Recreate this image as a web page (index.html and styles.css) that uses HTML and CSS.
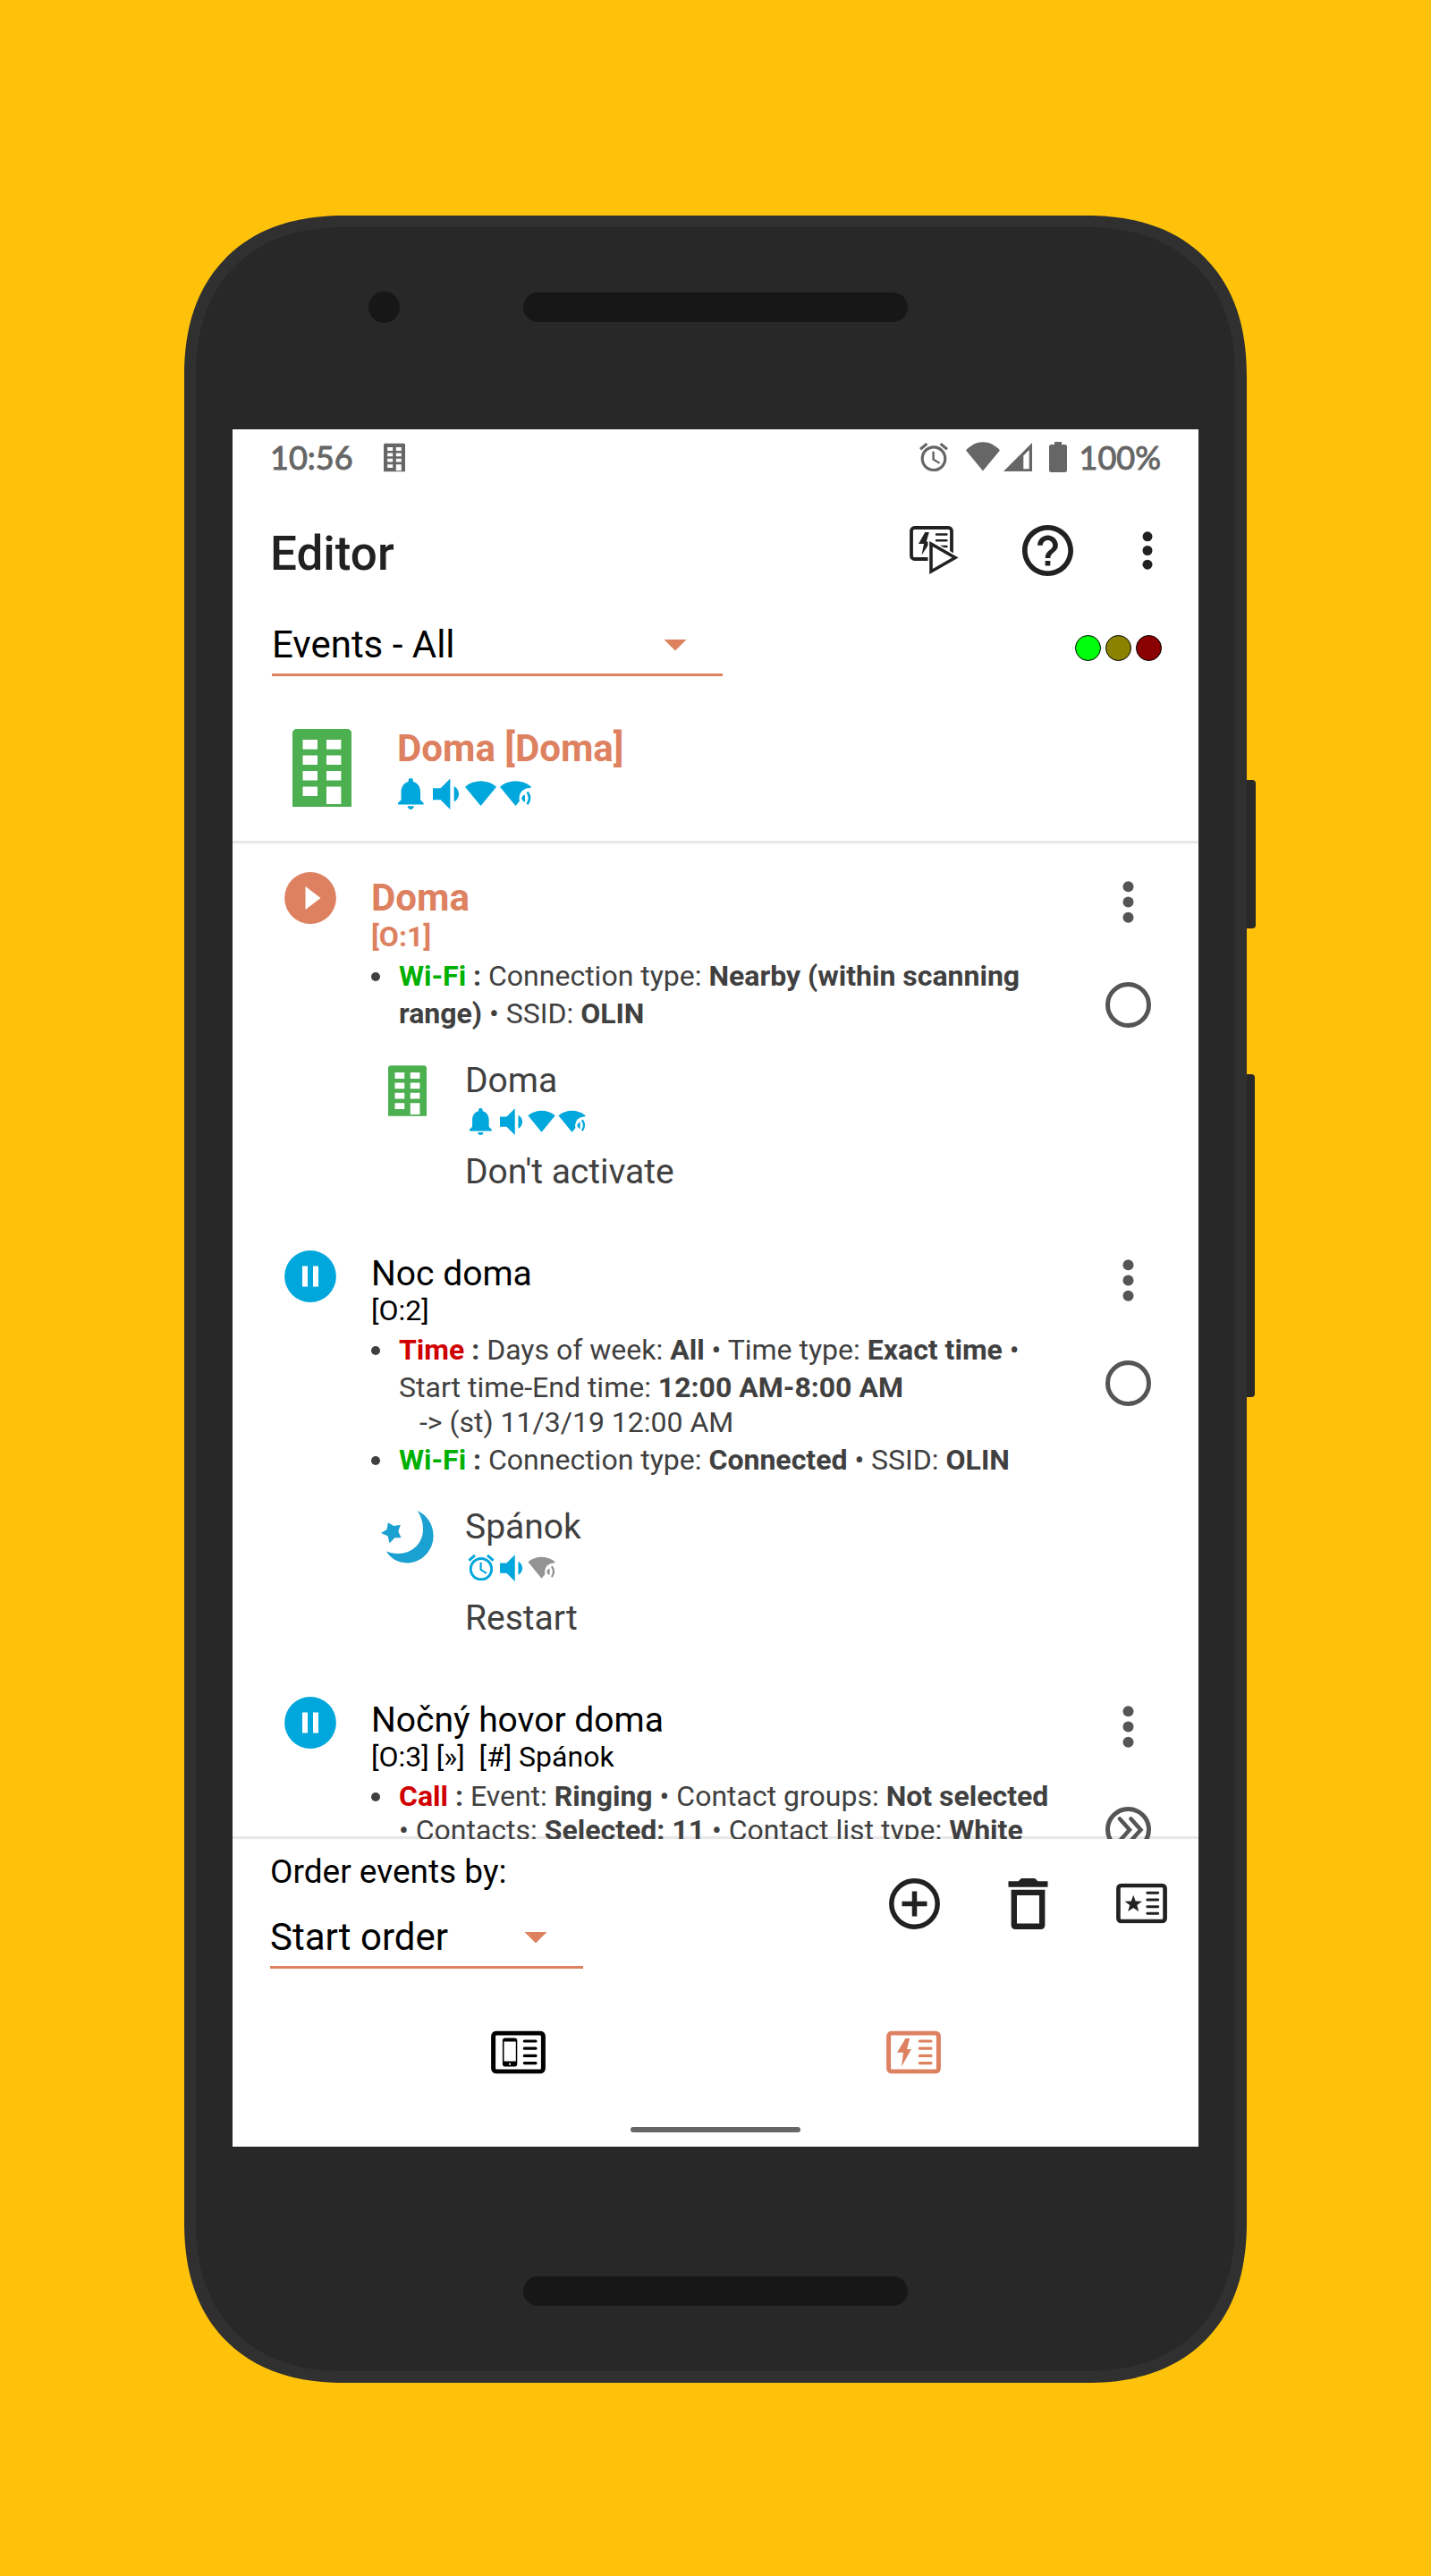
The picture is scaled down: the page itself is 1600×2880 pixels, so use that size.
FILE: index.html
```html
<!DOCTYPE html>
<html lang="en">
<head>
<meta charset="utf-8">
<meta name="viewport" content="width=device-width, initial-scale=1">
<title>Editor</title>
<link rel="stylesheet" href="styles.css">
</head>
<body>
<svg class="sprite" aria-hidden="true">
  <symbol id="building" viewBox="0 0 66 87"><path fill="currentColor" fill-rule="evenodd" d="M3 0H63L66 3V87H0V3ZM11.500 12V22.700H28V12ZM38 12V22.700H54.400V12ZM11.500 29.500V40H28V29.500ZM38 29.500V40H54.400V29.500ZM11.500 47V57.500H28V47ZM38 47V57.500H54.400V47ZM11.500 64.500V75H28V64.500ZM38 64.500V84H54.400V64.500Z"/></symbol>
  <symbol id="alarm" viewBox="2 1.860 20 20.140"><path fill="currentColor" d="M22 5.720l-4.600-3.860-1.290 1.530 4.600 3.860L22 5.720zM7.880 3.390L6.600 1.860 2 5.710l1.290 1.530 4.590-3.850zM12.500 8H11v6l4.750 2.850.75-1.230-4-2.370V8zM12 4c-4.970 0-9 4.030-9 9s4.020 9 9 9a9 9 0 0 0 0-18zm0 16c-3.870 0-7-3.130-7-7s3.130-7 7-7 7 3.130 7 7-3.130 7-7 7z"/></symbol>
  <symbol id="ind-bell" viewBox="0 0 39 37"><path fill="currentColor" transform="translate(-6.200 -3.500) scale(1.790)" d="M12 22c1.100 0 2-.9 2-2h-4c0 1.100.89 2 2 2zm6-6v-5c0-3.070-1.640-5.640-4.500-6.320V4c0-.83-.67-1.500-1.500-1.500s-1.500.67-1.500 1.500v.68C7.630 5.360 6 7.920 6 11v5l-2 2v1h16v-1l-2-2z"/></symbol>
  <symbol id="ind-alarm" viewBox="0 0 39 37" overflow="visible"><use href="#alarm" x="-1" y="1" width="34" height="34"/></symbol>
  <symbol id="ind-volume" viewBox="0 0 39 37"><path fill="currentColor" transform="translate(-9.750 -7.100) scale(2.150)" d="M18.500 12c0-1.770-1.020-3.290-2.500-4.030v8.050c1.480-.73 2.500-2.250 2.500-4.020zM5 9v6h4l5 5V4L9 9H5z"/></symbol>
  <symbol id="ind-wifi" viewBox="0 0 39 37" overflow="visible"><path fill="currentColor" d="M15.500 32L-2 10.700C8 2.200 23 2.200 33 10.700Z"/></symbol>
  <symbol id="ind-hotspot" viewBox="0 0 39 37" overflow="visible"><path fill="currentColor" d="M15.500 32L-2 10.700C8 2.200 23 2.200 33 10.700Z"/><circle cx="31" cy="23.500" r="11.500" fill="#fff"/><path fill="currentColor" d="M26 19.200C21 21.500 21 25.500 26 27.800Z"/><path fill="none" stroke="currentColor" stroke-width="2.600" d="M28.600 16.500Q33.500 23.300 28.600 30.200"/></symbol>
  <symbol id="card" viewBox="0 0 61 48"><rect x="2.600" y="2.600" width="55.800" height="42.800" rx="3.500" fill="none" stroke="currentColor" stroke-width="5"/><path d="M37.300 11.500H50M37.300 19.700H50M37.300 27.900H50M37.300 36.100H50" stroke="currentColor" stroke-width="3.200" stroke-linecap="round"/></symbol>
  <symbol id="dots" viewBox="0 0 12 47"><g fill="currentColor"><circle cx="6" cy="6.300" r="6"/><circle cx="6" cy="23.500" r="6"/><circle cx="6" cy="40.700" r="6"/></g></symbol>
  <symbol id="pause" viewBox="0 0 58 58"><circle cx="29" cy="29" r="28.900" fill="currentColor"/><path fill="#fff" d="M20 17.500H26V40.500H20ZM32 17.500H38V40.500H32Z"/></symbol>
</svg>

<div class="phone">
  <span class="side-key side-key-power"></span>
  <span class="side-key side-key-volume"></span>
  <div class="bezel-top"><span class="camera"></span><span class="speaker"></span></div>

  <div class="screen">
    <div class="status-bar">
      <span>10:56</span>
      <svg class="status-profile" width="24" height="33"><use href="#building"/></svg>
      <div class="status-icons">
        <svg width="32" height="34"><use href="#alarm"/></svg>
        <svg class="status-wifi" width="38" height="34" viewBox="0 0 38 34"><path fill="currentColor" d="M19 32.500L0 9.500C11-2.900 27-2.900 38 9.500Z"/></svg>
        <svg class="status-signal" width="32" height="34" viewBox="0 0 32 34"><path fill="currentColor" fill-rule="evenodd" d="M0 33L32 1V33ZM22.300 15.500V30.300H28.700V9Z"/></svg>
        <svg class="status-battery" width="20" height="34" viewBox="0 0 20 34"><path fill="currentColor" d="M6 0H14V3H17.500Q20 3 20 5.500V31.500Q20 34 17.500 34H2.500Q0 34 0 31.500V5.500Q0 3 2.500 3H6Z"/></svg>
        <span>100%</span>
      </div>
    </div>

    <header class="app-bar">
      <h1>Editor</h1>
      <div class="app-actions">
        <button type="button" aria-label="Run events">
          <svg width="56" height="57" viewBox="0 0 56 57"><rect x="2" y="3" width="45" height="35" rx="3.500" fill="none" stroke="currentColor" stroke-width="3.800"/><path fill="currentColor" d="M17.300 8H21.800L18.800 18.500H23.500L13.500 33.500L16 21H10Z"/><path stroke="currentColor" stroke-width="2.400" stroke-linecap="round" d="M30 10.500H41.500M30 17.200H41.500M30 24H41.500"/><path fill="#fff" stroke="#fff" stroke-width="7" d="M24 21L51 36.500L24 52Z"/><path fill="#fff" stroke="currentColor" stroke-width="3.600" d="M24 21L51 36.500L24 52Z"/></svg>
        </button>
        <button type="button" aria-label="Help">
          <svg width="57" height="57" viewBox="2 2 20 20"><path fill="currentColor" d="M11 18h2v-2h-2v2zm1-16C6.480 2 2 6.480 2 12s4.480 10 10 10 10-4.480 10-10S17.520 2 12 2zm0 18c-4.410 0-8-3.590-8-8s3.590-8 8-8 8 3.590 8 8-3.590 8-8 8zm0-14c-2.210 0-4 1.790-4 4h2c0-1.100.9-2 2-2s2 .9 2 2c0 2-3 1.750-3 5h2c0-2.250 3-2.500 3-5 0-2.210-1.790-4-4-4z"/></svg>
        </button>
        <button type="button" aria-label="More options"><svg width="26" height="43"><use href="#dots"/></svg></button>
      </div>
    </header>

    <div class="filter-bar">
      <div class="picker picker-filter"><select aria-label="Filter events"><option>Events - All</option></select></div>
      <div class="lights"><span class="light light-green"></span><span class="light light-yellow"></span><span class="light light-red"></span></div>
    </div>

    <section class="active-profile">
      <svg class="profile-icon" width="66" height="87"><use href="#building"/></svg>
      <div>
        <h2>Doma [Doma]</h2>
        <div class="indicators">
          <svg><use href="#ind-bell"/></svg><svg><use href="#ind-volume"/></svg><svg><use href="#ind-wifi"/></svg><svg><use href="#ind-hotspot"/></svg>
        </div>
      </div>
    </section>

    <main class="events">
      <article class="event event-running">
        <svg class="event-state" width="58" height="58" viewBox="0 0 58 58"><circle cx="29" cy="29" r="28.900" fill="currentColor"/><path fill="#fff" d="M23.500 16L40.500 29L23.500 42Z"/></svg>
        <div class="event-body">
          <h3>Doma</h3>
          <p class="event-order">[O:1]</p>
          <ul class="conditions">
            <li><div><b class="pass">Wi-Fi</b> <b>:</b> Connection type: <b>Nearby (within scanning range)</b> • SSID: <b>OLIN</b></div></li>
          </ul>
          <div class="preview">
            <svg class="preview-icon" width="59" height="60" viewBox="0 0 59 60"><use class="green" href="#building" x="8" y="1" width="43" height="57"/></svg>
            <div>
              <p>Doma</p>
              <div class="indicators indicators-small">
                <svg><use href="#ind-bell"/></svg><svg><use href="#ind-volume"/></svg><svg><use href="#ind-wifi"/></svg><svg><use href="#ind-hotspot"/></svg>
              </div>
              <p>Don't activate</p>
            </div>
          </div>
        </div>
        <div class="event-actions">
          <button type="button" aria-label="Event menu"><svg width="51" height="47"><use href="#dots"/></svg></button>
          <button type="button" aria-label="Ignore manual activation"><svg width="51" height="51" viewBox="0 0 51 51"><circle cx="25.500" cy="25.500" r="23" fill="none" stroke="currentColor" stroke-width="5"/></svg></button>
        </div>
      </article>

      <article class="event">
        <svg class="event-state" width="58" height="58"><use href="#pause"/></svg>
        <div class="event-body">
          <h3>Noc doma</h3>
          <p class="event-order">[O:2]</p>
          <ul class="conditions">
            <li><div><b class="fail">Time</b> <b>:</b> Days of week: <b>All</b> • Time type: <b>Exact time</b> • Start time-End time: <b>12:00 AM-8:00 AM</b><p class="next-alarm">-&gt; (st) 11/3/19 12:00 AM</p></div></li>
            <li><div><b class="pass">Wi-Fi</b> <b>:</b> Connection type: <b>Connected</b> • SSID: <b>OLIN</b></div></li>
          </ul>
          <div class="preview">
            <svg class="preview-icon" width="59" height="60" viewBox="0 0 59 60"><path fill="#1ba1d1" d="M40.700 0C52 5 58.600 16 58.600 28C58.600 45 45 58.400 29.500 58.400C19 58.400 10 53 6 45.300C10 47 14 48 19 48C35 48 47 36 47 21C47 13 45 7 40.700 0ZM7.900 13.300L14.300 17L21.800 15.700L19.300 23L22.500 30.300L15.400 30.300L9.600 36.300L7.500 28.300L0 25L6.500 21Z"/></svg>
            <div>
              <p>Spánok</p>
              <div class="indicators indicators-small">
                <svg><use href="#ind-alarm"/></svg><svg><use href="#ind-volume"/></svg><svg class="off"><use href="#ind-hotspot"/></svg>
              </div>
              <p>Restart</p>
            </div>
          </div>
        </div>
        <div class="event-actions">
          <button type="button" aria-label="Event menu"><svg width="51" height="47"><use href="#dots"/></svg></button>
          <button type="button" aria-label="Ignore manual activation"><svg width="51" height="51" viewBox="0 0 51 51"><circle cx="25.500" cy="25.500" r="23" fill="none" stroke="currentColor" stroke-width="5"/></svg></button>
        </div>
      </article>

      <article class="event">
        <svg class="event-state" width="58" height="58"><use href="#pause"/></svg>
        <div class="event-body">
          <h3>Nočný hovor doma</h3>
          <p class="event-order">[O:3] [»]&nbsp; [#] Spánok</p>
          <ul class="conditions conditions-tight">
            <li><div><b class="fail">Call</b> <b>:</b> Event: <b>Ringing</b> • Contact groups: <b>Not selected</b> • Contacts: <b>Selected: 11</b> • Contact list type: <b>White</b></div></li>
          </ul>
        </div>
        <div class="event-actions">
          <button type="button" aria-label="Event menu"><svg width="51" height="47"><use href="#dots"/></svg></button>
          <button type="button" aria-label="Force run"><svg width="51" height="51" viewBox="0 0 51 51"><g fill="none" stroke="currentColor"><circle cx="25.500" cy="25.500" r="23" stroke-width="5"/><path stroke-width="4.500" stroke-linecap="round" d="M16 13.500L27 25.700L16 38M28.500 13.500L39.500 25.700L28.500 38"/></g></svg></button>
        </div>
      </article>
    </main>

    <div class="bottom-bar">
      <div class="order-field">
        <label for="order">Order events by:</label>
        <div class="picker picker-order"><select id="order"><option>Start order</option></select></div>
      </div>
      <div class="list-actions">
        <button type="button" aria-label="Add event"><svg width="57" height="57" viewBox="0 0 57 57"><g fill="none" stroke="currentColor" stroke-width="5.500"><circle cx="28.500" cy="28.500" r="25.700"/><path d="M14.500 28.500H42.500M28.500 14.500V42.500"/></g></svg></button>
        <button type="button" aria-label="Delete all events"><svg width="57" height="57" viewBox="0 0 57 57"><path fill="currentColor" fill-rule="evenodd" d="M6.500 3.200H17.500L21 0H36L39.500 3.200H50.500V9.800H6.500ZM9.600 12.800H47.400V52Q47.400 57 42.400 57H14.600Q9.600 57 9.600 52ZM16 19V50.400H41V19Z"/></svg></button>
        <button type="button" aria-label="Default profile"><svg width="57" height="57" viewBox="0 -6 61 61"><use href="#card" width="61" height="48"/><path fill="currentColor" d="M20.600 14L23.200 21.200L31 21.500L24.900 26.200L27.100 33.600L20.600 29.300L14.100 33.600L16.300 26.200L10.200 21.500L18 21.200Z"/></svg></button>
      </div>
    </div>

    <nav class="tabs">
      <button type="button" class="tab" aria-label="Profiles"><svg width="61" height="49" viewBox="0 0 61 48"><use href="#card" width="61" height="48"/><path fill="currentColor" fill-rule="evenodd" d="M15.900 7.900H26.300Q29.300 7.900 29.300 10.900V37Q29.300 40 26.300 40H15.900Q12.900 40 12.900 37V10.900Q12.900 7.900 15.900 7.900ZM14.500 12V34H27.800V12ZM20 36.200V38H22V36.200Z"/></svg></button>
      <button type="button" class="tab tab-current" aria-label="Events"><svg width="61" height="49" viewBox="0 0 61 48"><use href="#card" width="61" height="48"/><path fill="currentColor" d="M21.400 8.600H26.200L23 20.400H28L17 40L19 24.300H12Z"/></svg></button>
    </nav>
    <span class="home-pill"></span>
  </div>

  <div class="bezel-bottom"><span class="speaker"></span></div>
</div>
</body>
</html>
```
FILE: styles.css
```css
:root {
  --accent: #dd8160;
  --blue: #00a7dc;
  --green: #4caf50;
  --line: #e7e7e7;
  --ink: #212121;
  --muted: #404040;
  --status: #666;
}

* { box-sizing: border-box; }

body {
  margin: 0;
  min-height: 100vh;
  padding: 241px 24px 216px;
  background: #ffc20a;
  font-family: Roboto, "Liberation Sans", sans-serif;
  color: #000;
}

h1, h2, h3, p, ul { margin: 0; padding: 0; }
svg { display: block; flex: none; }

button {
  display: block;
  padding: 0;
  border: 0;
  background: none;
  color: inherit;
  cursor: pointer;
}

.sprite { position: absolute; width: 0; height: 0; }

/* Device */
.phone {
  position: relative;
  width: 100%;
  max-width: 1188px;
  margin: 0 auto;
  padding: 0 41px;
  border: 13px solid #303030;
  border-radius: 166px;
  background: #282828;
}

@supports (corner-shape: superellipse(1.2)) {
  .phone {
    border-radius: 180px;
    corner-shape: superellipse(1.2);
  }
}

.side-key {
  position: absolute;
  border-radius: 0 4px 4px 0;
  background: #282828;
}

.side-key-power { top: 618px; right: -23px; width: 10px; height: 166px; }
.side-key-volume { top: 947px; right: -22px; width: 9px; height: 361px; }

.bezel-top {
  display: grid;
  grid-template-columns: 1fr minmax(0, 430px) 1fr;
  align-items: center;
  padding: 72px 0 119px;
}

.camera {
  justify-self: end;
  width: 35px;
  height: 35px;
  margin-right: 138px;
  border-radius: 50%;
  background: #171717;
}

.speaker {
  width: 100%;
  max-width: 430px;
  height: 33px;
  border-radius: 17px;
  background: #171717;
}

.bezel-bottom {
  display: flex;
  justify-content: center;
  padding: 145px 0 73px;
}

.screen {
  display: flex;
  flex-direction: column;
  aspect-ratio: 9 / 16;
  background: #fff;
}

/* Status bar */
.status-bar {
  display: flex;
  align-items: center;
  height: 62px;
  padding: 0 42px;
  font: 36px/44px Lato, Roboto, sans-serif;
  color: var(--status);
  -webkit-text-stroke: 1px var(--status);
}

.status-profile { margin-left: 34px; }
.status-icons { display: flex; align-items: center; margin-left: auto; }
.status-wifi { margin-left: 20px; }
.status-signal { margin-left: 4px; }
.status-battery { margin: 0 14px 0 19px; }

/* Title row */
.app-bar {
  display: flex;
  align-items: center;
  justify-content: space-between;
  height: 147px;
  padding: 0 44px 0 42px;
  color: var(--ink);
}

.app-bar h1 {
  padding-top: 6px;
  font-size: 53px;
  line-height: 62px;
  font-weight: 500;
}

.app-actions { display: flex; align-items: center; gap: 70px; }

/* Filter row */
.filter-bar {
  display: flex;
  align-items: center;
  justify-content: space-between;
  padding: 0 41px 0 44px;
}

.picker {
  display: grid;
  align-items: center;
  height: 67px;
  border-bottom: 3px solid var(--accent);
}

.picker-filter { width: 504px; }
.picker-order { width: 350px; }

.picker select, .picker::after { grid-area: 1 / 1; }

.picker select {
  appearance: none;
  width: 100%;
  height: 64px;
  padding: 0;
  border: 0;
  background: none;
  font: 42px/64px Roboto, "Liberation Sans", sans-serif;
  color: #000;
}

.picker::after {
  content: "";
  justify-self: end;
  width: 26px;
  height: 13px;
  margin-right: 40px;
  background: var(--accent);
  clip-path: polygon(0 0, 100% 0, 50% 100%);
  pointer-events: none;
}

.lights { display: flex; gap: 5px; margin-top: 4px; }

.light {
  width: 29px;
  height: 29px;
  border: 1px solid #000;
  border-radius: 50%;
}

.light-green { background: #00ff0c; }
.light-yellow { background: #8b8300; }
.light-red { background: #8b0000; }

/* Active profile */
.active-profile {
  display: flex;
  align-items: flex-start;
  gap: 51px;
  padding: 56px 42px 34px 67px;
  border-bottom: 3px solid var(--line);
}

.profile-icon { margin-top: 3px; color: var(--green); }

.active-profile h2 {
  font-size: 42px;
  line-height: 49px;
  font-weight: 700;
  color: var(--accent);
}

.indicators { display: flex; margin-top: 8px; color: var(--blue); }
.indicators svg { width: 39px; height: 37px; overflow: visible; }
.indicators .off { color: #939393; }

/* Event list */
.events {
  flex: 1;
  min-height: 0;
  overflow: hidden;
  box-shadow: inset 0 -3px var(--line);
}

.event {
  display: grid;
  grid-template-columns: 58px minmax(0, 1fr) 51px;
  align-items: start;
  padding: 32px 53px 33px 58px;
}

.event-state { color: var(--blue); }
.event-body { padding: 4px 56px 0 39px; }

.event h3 {
  font-size: 39px;
  line-height: 44px;
  font-weight: 400;
}

.event-order { font-size: 32px; line-height: 39px; }

.event-running .event-state,
.event-running h3,
.event-running .event-order { color: var(--accent); }
.event-running h3 { font-size: 42px; line-height: 49px; font-weight: 700; }
.event-running .event-order { font-weight: 700; }

.conditions {
  margin-top: 3px;
  list-style: none;
  font-size: 32px;
  line-height: 42px;
  color: var(--muted);
}

.conditions-tight { margin-top: 5px; line-height: 38px; }

.conditions li {
  display: grid;
  grid-template-columns: 10px minmax(0, 1fr);
  column-gap: 21px;
}

.conditions li::before {
  content: "";
  width: 10px;
  height: 10px;
  margin-top: calc(0.5lh - 4px);
  border-radius: 50%;
  background: var(--muted);
}

.conditions b { font-weight: 700; }
.pass { color: #00b000; }
.fail { color: #d00000; }

.next-alarm { padding-left: 23px; margin-bottom: 3px; line-height: 36px; }

.preview {
  display: flex;
  align-items: flex-start;
  gap: 35px;
  margin: 31px 0 0 11px;
  font-size: 39px;
  line-height: 46px;
  color: var(--muted);
}

.preview-icon { margin-top: 5px; }
.green { color: var(--green); }

.indicators-small { margin: 7px 0 17px 4px; }
.indicators-small svg { width: 34px; height: 32px; }

.event-actions {
  display: flex;
  flex-direction: column;
  gap: 66px;
  padding-top: 10px;
  color: #555;
}

/* Bottom controls */
.bottom-bar {
  display: flex;
  align-items: flex-start;
  justify-content: space-between;
  padding: 15px 35px 20px 42px;
}

.order-field { display: flex; flex-direction: column; gap: 19px; }
.order-field label { font-size: 37px; line-height: 44px; }

.list-actions {
  display: flex;
  gap: 70px;
  padding-top: 29px;
  color: var(--ink);
}

.tabs { display: flex; padding: 49px 98px 59px; }
.tab { display: flex; flex: 1; justify-content: center; }
.tab-current { color: var(--accent); }

.home-pill {
  align-self: center;
  width: 190px;
  height: 6px;
  margin-bottom: 16px;
  border-radius: 3px;
  background: var(--status);
}
```
